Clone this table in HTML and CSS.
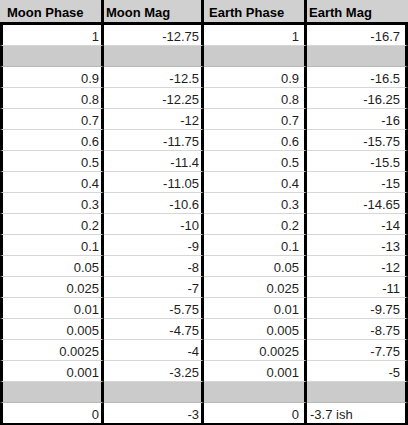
FILE: index.html
```html
<!DOCTYPE html>
<html>
<head>
<meta charset="utf-8">
<link rel="stylesheet" href="styles.css">
</head>
<body>
<div class="sheet">
  <div class="row head">
    <div class="cell c1">Moon Phase</div>
    <div class="cell c2">Moon Mag</div>
    <div class="cell c3">Earth Phase</div>
    <div class="cell c4">Earth Mag</div>
  </div>
  <div class="row"><div class="cell c1">1</div><div class="cell c2">-12.75</div><div class="cell c3">1</div><div class="cell c4">-16.7</div></div>
  <div class="row blank"><div class="cell c1"></div><div class="cell c2"></div><div class="cell c3"></div><div class="cell c4"></div></div>
  <div class="row"><div class="cell c1">0.9</div><div class="cell c2">-12.5</div><div class="cell c3">0.9</div><div class="cell c4">-16.5</div></div>
  <div class="row"><div class="cell c1">0.8</div><div class="cell c2">-12.25</div><div class="cell c3">0.8</div><div class="cell c4">-16.25</div></div>
  <div class="row"><div class="cell c1">0.7</div><div class="cell c2">-12</div><div class="cell c3">0.7</div><div class="cell c4">-16</div></div>
  <div class="row"><div class="cell c1">0.6</div><div class="cell c2">-11.75</div><div class="cell c3">0.6</div><div class="cell c4">-15.75</div></div>
  <div class="row"><div class="cell c1">0.5</div><div class="cell c2">-11.4</div><div class="cell c3">0.5</div><div class="cell c4">-15.5</div></div>
  <div class="row"><div class="cell c1">0.4</div><div class="cell c2">-11.05</div><div class="cell c3">0.4</div><div class="cell c4">-15</div></div>
  <div class="row"><div class="cell c1">0.3</div><div class="cell c2">-10.6</div><div class="cell c3">0.3</div><div class="cell c4">-14.65</div></div>
  <div class="row"><div class="cell c1">0.2</div><div class="cell c2">-10</div><div class="cell c3">0.2</div><div class="cell c4">-14</div></div>
  <div class="row"><div class="cell c1">0.1</div><div class="cell c2">-9</div><div class="cell c3">0.1</div><div class="cell c4">-13</div></div>
  <div class="row"><div class="cell c1">0.05</div><div class="cell c2">-8</div><div class="cell c3">0.05</div><div class="cell c4">-12</div></div>
  <div class="row"><div class="cell c1">0.025</div><div class="cell c2">-7</div><div class="cell c3">0.025</div><div class="cell c4">-11</div></div>
  <div class="row"><div class="cell c1">0.01</div><div class="cell c2">-5.75</div><div class="cell c3">0.01</div><div class="cell c4">-9.75</div></div>
  <div class="row"><div class="cell c1">0.005</div><div class="cell c2">-4.75</div><div class="cell c3">0.005</div><div class="cell c4">-8.75</div></div>
  <div class="row"><div class="cell c1">0.0025</div><div class="cell c2">-4</div><div class="cell c3">0.0025</div><div class="cell c4">-7.75</div></div>
  <div class="row"><div class="cell c1">0.001</div><div class="cell c2">-3.25</div><div class="cell c3">0.001</div><div class="cell c4">-5</div></div>
  <div class="row blank"><div class="cell c1"></div><div class="cell c2"></div><div class="cell c3"></div><div class="cell c4"></div></div>
  <div class="row last"><div class="cell c1">0</div><div class="cell c2">-3</div><div class="cell c3">0</div><div class="cell c4 text">-3.7 ish</div></div>
</div>
</body>
</html>
```

FILE: styles.css
```css
html, body {
  margin: 0;
  padding: 0;
  background: #ffffff;
}

.sheet {
  width: 408px;
  height: 425px;
  overflow: hidden;
  font-family: "Liberation Sans", Arial, sans-serif;
  font-size: 13px;
  color: #1e1e1e;
}

.row {
  display: flex;
  height: 21px;
}

.cell {
  box-sizing: border-box;
  height: 21px;
  padding-top: 3px;
  line-height: 18px;
  text-align: right;
  white-space: nowrap;
  border-right: 3px solid #000;
  border-bottom: 1px solid #d6d6d6;
  background: #ffffff;
}

.c1 { width: 104px; border-left: 3px solid #000; padding-right: 2px; }
.c2 { width: 100px; padding-right: 2px; }
.c3 { width: 103px; padding-right: 5px; }
.c4 { width: 101px; padding-right: 5px; }

.cell.text {
  text-align: left;
  padding-left: 3px;
}

.blank .cell {
  background: #cbcbcb;
  border-bottom-color: #b9b9b9;
}

.row.last,
.last .cell {
  height: 22px;
}

.last .cell {
  border-bottom: 2px solid #000;
}

.head {
  height: 25px;
}

.head .cell {
  height: 25px;
  padding-top: 2px;
  line-height: 21px;
  text-align: left;
  font-weight: bold;
  color: #000;
  background: #d0d0d0;
  border-bottom: 3px solid #000;
  padding-right: 0;
}

.head .c1 { border-left: none; padding-left: 7px; }
.head .c2 { padding-left: 2px; }
.head .c3 { padding-left: 5px; }
.head .c4 { padding-left: 2px; border-right: none; }
```
